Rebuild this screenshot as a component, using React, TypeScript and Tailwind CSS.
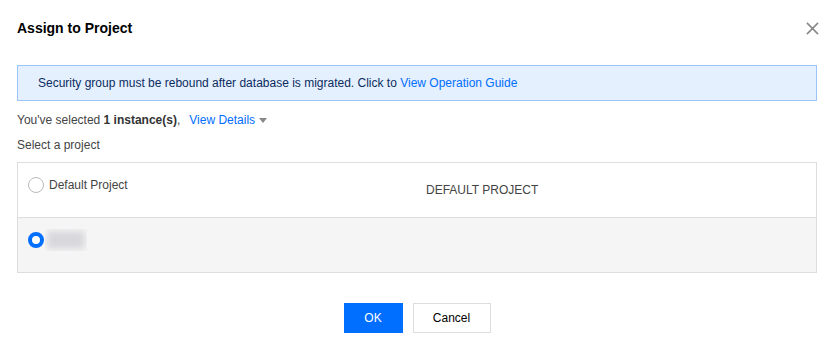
export default function App() {
  return (
    <div className="relative h-[357px] w-[824px] bg-white font-['Liberation_Sans',Arial,sans-serif] text-[12px] text-[#444]">
      {/* Header */}
      <div className="flex h-[57px] items-center justify-between pl-[17px] pr-0">
        <h2 className="text-[14px] font-bold text-[#000]">Assign to Project</h2>
        <button className="flex h-[24px] w-[24px] items-center justify-center text-[#888]">
          <svg width="13" height="13" viewBox="0 0 14 14" fill="none" stroke="currentColor" strokeWidth="1.7">
            <path d="M1 1L13 13M13 1L1 13" />
          </svg>
        </button>
      </div>

      <div className="pl-[17px] pr-[7px]">
        {/* Notice */}
        <div className="mt-[8px] flex h-[36px] items-center border border-[#9cc4f7] bg-[#e5f0ff] pl-[20px] text-[#0b2c5e]">
          <span>
            Security group must be rebound after database is migrated. Click to{" "}
            <a href="#" className="text-[#006eff]">View Operation Guide</a>
          </span>
        </div>

        <div className="mt-[11px] flex h-[16px] items-center">
          <span>
            You&apos;ve selected <b className="text-[#333]">1 instance(s)</b>,
          </span>
          <a href="#" className="ml-[9px] text-[#006eff]">View Details</a>
          <svg className="ml-[4px]" width="8" height="5" viewBox="0 0 8 5">
            <path d="M0 0H8L4 5Z" fill="#888" />
          </svg>
        </div>

        <p className="mt-[9px] h-[16px] leading-[16px]">Select a project</p>

        {/* Project table */}
        <div className="mt-[9px] border border-[#ddd]">
          <div className="grid h-[55px] grid-cols-2 border-b border-[#ddd] bg-white">
            <div className="flex items-start gap-[5px] pl-[10px] pt-[14px]">
              <span className="h-[16px] w-[16px] rounded-full border border-[#bbb] bg-white" />
              <span className="leading-[16px] text-[#444]">Default Project</span>
            </div>
            <div className="flex items-center pl-[9px] text-[#444]">DEFAULT PROJECT</div>
          </div>
          <div className="grid h-[54px] grid-cols-2 bg-[#f5f5f5]">
            <div className="flex items-start gap-[1px] pl-[10px] pt-[14px]">
              <span className="h-[16px] w-[16px] rounded-full border-[4px] border-[#006eff] bg-white" />
              <span className="relative -mt-[3px] h-[22px] w-[42px] overflow-hidden">
                <span className="absolute inset-[2px] rounded-[3px] bg-[#d8d8dc] blur-[3px]" />
              </span>
            </div>
            <div />
          </div>
        </div>

        {/* Footer buttons */}
        <div className="mt-[30px] flex justify-center gap-[10px]">
          <button className="h-[30px] w-[59px] bg-[#006eff] text-white">OK</button>
          <button className="h-[30px] w-[78px] border border-[#ddd] bg-white text-[#000]">Cancel</button>
        </div>
      </div>
    </div>
  );
}
